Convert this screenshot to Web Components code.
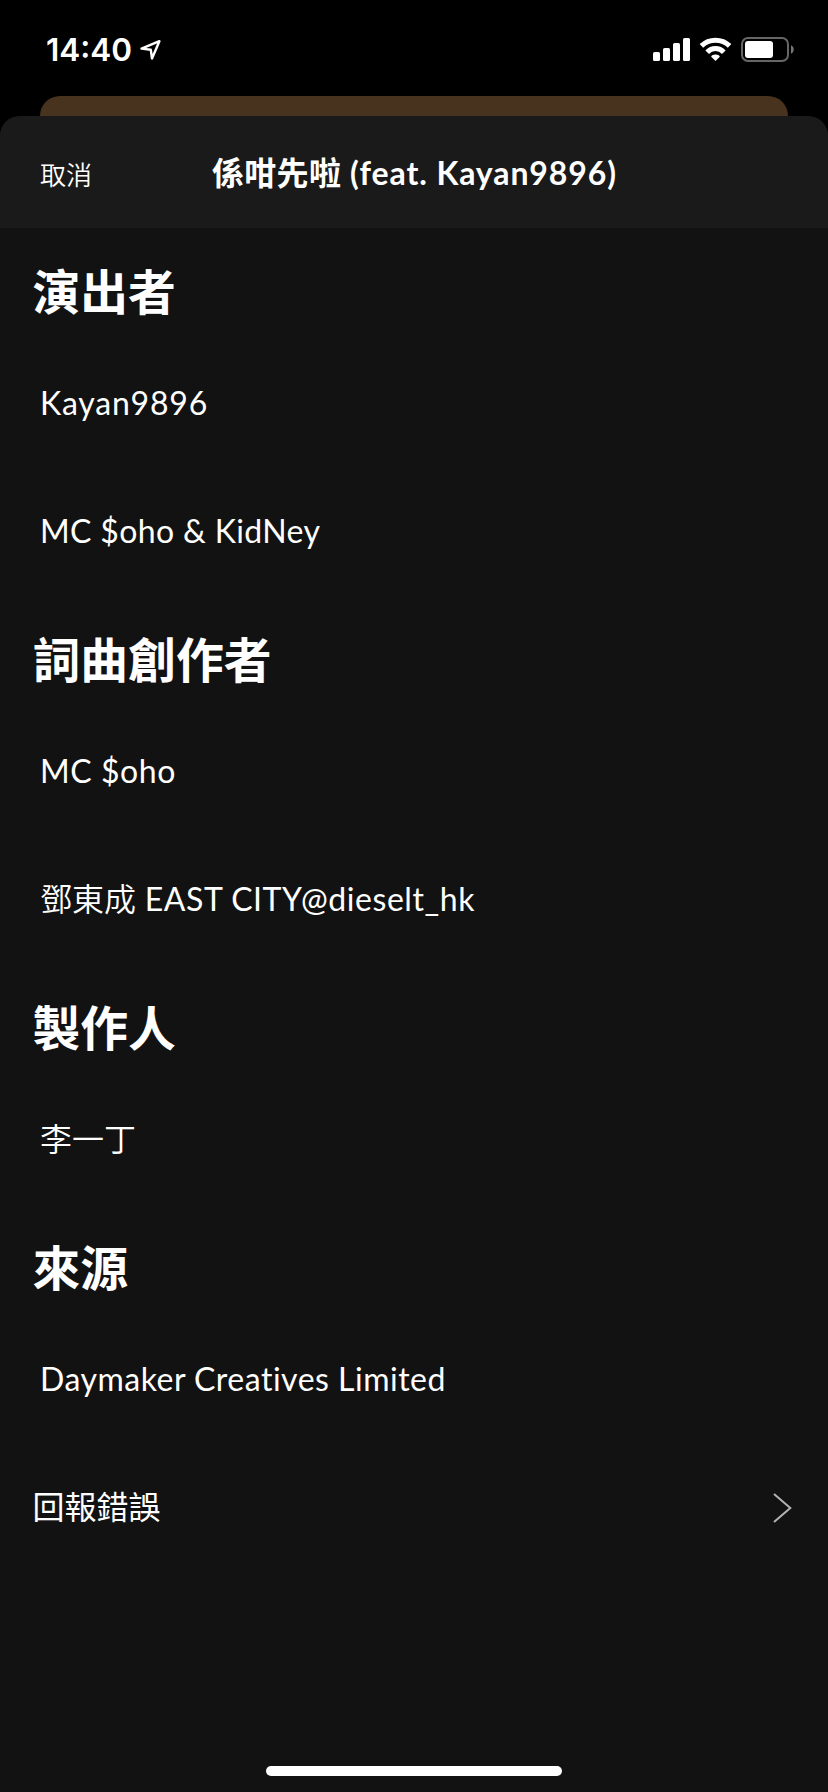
<!DOCTYPE html>
<html lang="zh-Hant-HK">
<head>
<meta charset="utf-8">
<title>係咁先啦 (feat. Kayan9896)</title>
<style>
  body {
    margin: 0;
    background: #000;
    color: #fff;
    font-family: Lato, 'Noto Sans CJK TC', sans-serif;
  }
  .han {
    font-family: 'Noto Sans CJK TC', sans-serif;
    font-weight: 350;
    line-height: 38px;
    letter-spacing: 0;
  }
</style>
</head>
<body>
<credits-screen>
  <status-bar slot="status" time="14:40"></status-bar>
  <sheet-header slot="header" cancel="取消">係咁先啦<span style="letter-spacing: 0.9px"> (feat. Kayan9896)</span></sheet-header>
  <credits-section heading="演出者">
    <credits-row style="letter-spacing: 0.8px">Kayan9896</credits-row>
    <credits-row style="letter-spacing: 0.35px">MC $oho &amp; KidNey</credits-row>
  </credits-section>
  <credits-section heading="詞曲創作者">
    <credits-row style="letter-spacing: 0.55px">MC $oho</credits-row>
    <credits-row style="letter-spacing: 0.55px; padding-bottom: 4px"><span class="han">鄧東成</span> EAST CITY@dieselt_hk</credits-row>
  </credits-section>
  <credits-section heading="製作人">
    <credits-row style="padding-bottom: 4px"><span class="han">李一丁</span></credits-row>
  </credits-section>
  <credits-section heading="來源">
    <credits-row style="letter-spacing: 0.5px">Daymaker Creatives Limited</credits-row>
  </credits-section>
  <report-link>回報錯誤</report-link>
</credits-screen>

<script>
class CreditsScreen extends HTMLElement {
  constructor() {
    super();
    this.attachShadow({ mode: 'open' });
    this.shadowRoot.innerHTML = `
      <style>
        :host {
          display: flex;
          flex-direction: column;
          width: 828px;
          height: 1792px;
          overflow: hidden;
        }
        .behind {
          flex: none;
          height: 20px;
          margin: 0 40px;
          background: #48341e;
          border-radius: 20px 20px 0 0;
        }
        .sheet {
          flex: 1;
          display: flex;
          flex-direction: column;
          background: #121212;
          border-radius: 20px 20px 0 0;
          overflow: hidden;
        }
        .home {
          width: 296px;
          height: 10px;
          margin: auto auto 16px;
          border-radius: 5px;
          background: #fff;
        }
      </style>
      <slot name="status"></slot>
      <div class="behind"></div>
      <div class="sheet">
        <slot name="header"></slot>
        <slot></slot>
        <div class="home"></div>
      </div>
    `;
  }
}

class StatusBar extends HTMLElement {
  constructor() {
    super();
    this.attachShadow({ mode: 'open' });
    this.shadowRoot.innerHTML = `
      <style>
        :host {
          flex: none;
          display: flex;
          align-items: flex-start;
          box-sizing: border-box;
          height: 96px;
          padding: 34px 32px 0 46px;
        }
        .time {
          width: 92px;
          font: 600 31.5px/32px Inter, sans-serif;
        }
        .icons {
          margin-left: auto;
        }
        svg {
          display: block;
        }
      </style>
      <span class="time"></span>
      <svg width="26" height="30" viewBox="138 34 26 30">
        <path d="M141.5 48.6 159.4 41.2 152 58.5 150.8 49.8Z" fill="none" stroke="#fff" stroke-width="2.4" stroke-linejoin="round"/>
      </svg>
      <svg class="icons" width="144" height="30" viewBox="652 34 144 30">
        <g fill="#fff">
          <rect x="653" y="52" width="7" height="9" rx="1.6"/>
          <rect x="663" y="48" width="7" height="13" rx="1.6"/>
          <rect x="673" y="43" width="7" height="18" rx="1.6"/>
          <rect x="683" y="38" width="7" height="23" rx="1.6"/>
          <path d="M715.5 61 711.2 56.8Q711.2 54.6 715.5 54.4 719.8 54.6 719.8 56.8Z"/>
          <rect x="745" y="41" width="28" height="17" rx="3"/>
        </g>
        <g fill="none" stroke="#fff" stroke-width="5">
          <path d="M701.4 45.9A20.2 20.2 0 0 1 729.6 45.9"/>
          <path d="M707.2 52.2A11.4 11.4 0 0 1 723.8 52.2"/>
        </g>
        <rect x="742" y="38" width="46" height="23" rx="6" fill="none" stroke="#666" stroke-width="2"/>
        <path d="M791 45.3C794.6 46.5 794.6 52.5 791 53.7Z" fill="#777"/>
      </svg>
    `;
  }

  connectedCallback() {
    this.shadowRoot.querySelector('.time').textContent = this.getAttribute('time');
  }
}

class SheetHeader extends HTMLElement {
  constructor() {
    super();
    this.attachShadow({ mode: 'open' });
    this.shadowRoot.innerHTML = `
      <style>
        :host {
          flex: none;
          display: grid;
          grid-template-columns: 172px 1fr 172px;
          align-items: center;
          box-sizing: border-box;
          height: 112px;
          padding: 2px 40px 0;
          background: #1a1a1a;
        }
        .cancel {
          font-family: 'Noto Sans CJK TC', sans-serif;
          font-size: 26px;
          font-weight: 350;
          line-height: 40px;
          padding-top: 2px;
        }
        .title {
          font-size: 32px;
          font-weight: 700;
          line-height: 40px;
          white-space: nowrap;
          letter-spacing: 0.3px;
        }
      </style>
      <span class="cancel"></span>
      <span class="title"><slot></slot></span>
    `;
  }

  connectedCallback() {
    this.shadowRoot.querySelector('.cancel').textContent = this.getAttribute('cancel');
  }
}

class CreditsSection extends HTMLElement {
  constructor() {
    super();
    this.attachShadow({ mode: 'open' });
    this.shadowRoot.innerHTML = `
      <style>
        :host {
          flex: none;
          display: block;
        }
        h2 {
          box-sizing: border-box;
          height: 112px;
          margin: 0;
          padding: 32px 32.5px 0;
          font-size: 47.8px;
          line-height: 64px;
          font-weight: 700;
        }
      </style>
      <h2></h2>
      <slot></slot>
    `;
  }

  connectedCallback() {
    this.shadowRoot.querySelector('h2').textContent = this.getAttribute('heading');
  }
}

class CreditsRow extends HTMLElement {
  constructor() {
    super();
    this.attachShadow({ mode: 'open' });
    this.shadowRoot.innerHTML = `
      <style>
        :host {
          display: flex;
          align-items: center;
          box-sizing: border-box;
          height: 128px;
          padding: 0 40px 2px;
          font-size: 32px;
          line-height: 40px;
        }
      </style>
      <span><slot></slot></span>
    `;
  }
}

class ReportLink extends HTMLElement {
  constructor() {
    super();
    this.attachShadow({ mode: 'open' });
    this.shadowRoot.innerHTML = `
      <style>
        :host {
          flex: none;
          display: flex;
          align-items: center;
          justify-content: space-between;
          height: 128px;
          padding: 0 36px 0 32.5px;
          font-size: 32px;
          line-height: 40px;
        }
        span {
          padding-bottom: 2px;
        }
      </style>
      <span><slot></slot></span>
      <svg width="20" height="32" viewBox="0 0 20 32">
        <path d="M2 2 18.3 16 2 30" fill="none" stroke="#b3b3b3" stroke-width="2"/>
      </svg>
    `;
  }
}

customElements.define('credits-screen', CreditsScreen);
customElements.define('status-bar', StatusBar);
customElements.define('sheet-header', SheetHeader);
customElements.define('credits-section', CreditsSection);
customElements.define('credits-row', CreditsRow);
customElements.define('report-link', ReportLink);
</script>
</body>
</html>
